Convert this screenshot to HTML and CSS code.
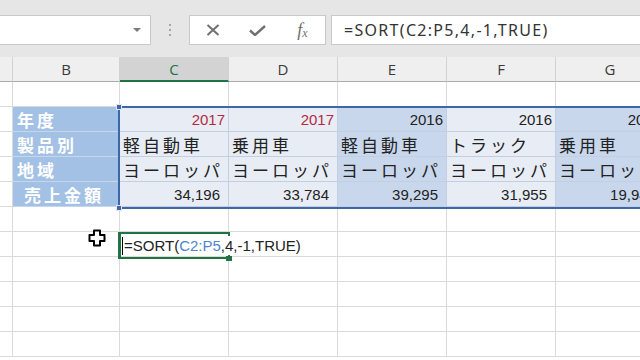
FILE: index.html
```html
<!DOCTYPE html>
<html lang="ja">
<head>
    <meta charset="UTF-8">
    <title>SORT</title>
    <link rel="stylesheet" href="styles.css">
</head>
<body>
    <div class="topbar">
        <div class="namebox"><span class="arrow"></span></div>
        <div class="grip"><i></i><i></i><i></i></div>
        <div class="fxbtns">
            <div class="btn">
                <svg width="14" height="12" viewBox="0 0 14 12"><path d="M1.5 1 L12.5 11 M12.5 1 L1.5 11" stroke="#707070" stroke-width="2" fill="none"/></svg>
            </div>
            <div class="btn">
                <svg width="17" height="11" viewBox="0 0 17 11"><path d="M1 5.5 L6 10 L16 1" stroke="#707070" stroke-width="2.4" fill="none"/></svg>
            </div>
            <div class="btn"><span class="fx">f<sub>x</sub></span></div>
        </div>
        <div class="formula">=SORT(C2:P5,4,-1,TRUE)</div>
    </div>

    <div class="sheet">
        <div class="row head">
            <div class="h"></div>
            <div class="h">B</div>
            <div class="h sel">C</div>
            <div class="h">D</div>
            <div class="h">E</div>
            <div class="h">F</div>
            <div class="h">G</div>
        </div>
        <div class="row"><div></div><div></div><div></div><div></div><div></div><div></div><div></div></div>
        <div class="row">
            <div></div>
            <div class="lbl">年度</div>
            <div class="v lt num red">2017</div>
            <div class="v lt num red">2017</div>
            <div class="v dk num">2016</div>
            <div class="v lt num">2016</div>
            <div class="v dk num">2016</div>
        </div>
        <div class="row">
            <div></div>
            <div class="lbl">製品別</div>
            <div class="v lt">軽自動車</div>
            <div class="v lt">乗用車</div>
            <div class="v dk">軽自動車</div>
            <div class="v lt">トラック</div>
            <div class="v dk">乗用車</div>
        </div>
        <div class="row">
            <div></div>
            <div class="lbl">地域</div>
            <div class="v lt">ヨーロッパ</div>
            <div class="v lt">ヨーロッパ</div>
            <div class="v dk">ヨーロッパ</div>
            <div class="v lt">ヨーロッパ</div>
            <div class="v dk">ヨーロッパ</div>
        </div>
        <div class="row">
            <div></div>
            <div class="lbl indent">売上金額</div>
            <div class="v lt num amt">34,196</div>
            <div class="v lt num amt">33,784</div>
            <div class="v dk num amt">39,295</div>
            <div class="v lt num amt">31,955</div>
            <div class="v dk num amt">19,948</div>
        </div>
        <div class="row"><div></div><div></div><div></div><div></div><div></div><div></div><div></div></div>
        <div class="row"><div></div><div></div><div></div><div></div><div></div><div></div><div></div></div>
        <div class="row"><div></div><div></div><div></div><div></div><div></div><div></div><div></div></div>
        <div class="row"><div></div><div></div><div></div><div></div><div></div><div></div><div></div></div>
        <div class="row"><div></div><div></div><div></div><div></div><div></div><div></div><div></div></div>
        <div class="row"><div></div><div></div><div></div><div></div><div></div><div></div><div></div></div>

        <!-- overlays -->
        <div class="range"></div>
        <div class="knob top"></div>
        <div class="knob bottom"></div>

        <div class="active">
            <span class="edit"><span class="caret"></span>=SORT(<span class="ref">C2:P5</span>,4,-1,TRUE)</span>
        </div>
        <div class="fill"></div>

        <svg class="pointer" width="18" height="18" viewBox="0 0 18 18">
            <path d="M6 1.5 H12 V6 H16.5 V12 H12 V16.5 H6 V12 H1.5 V6 H6 Z" fill="#fff" stroke="#000" stroke-width="2" stroke-linejoin="round"/>
        </svg>
    </div>
</body>
</html>
```

FILE: styles.css
```css
html,body{
    margin:0;
    padding:0;
    width:640px;
    height:360px;
    overflow:hidden;
    background:#fff;
    font-family:"Liberation Sans", Arial, sans-serif;
}

/* formula bar */
.topbar{
    height:57px;
    box-sizing:border-box;
    padding-top:15px;
    background:#e6e6e6;
    display:flex;
    align-items:flex-start;
}
.namebox{
    width:152px;
    height:30px;
    box-sizing:border-box;
    margin-left:-1px;
    background:#fff;
    border:1px solid #c9c9c9;
    display:flex;
    align-items:center;
    justify-content:flex-end;
    padding-right:9px;
}
.arrow{
    width:0;
    height:0;
    border-left:4px solid transparent;
    border-right:4px solid transparent;
    border-top:4px solid #7b7b7b;
}
.grip{
    width:38px;
    height:30px;
    display:flex;
    flex-direction:column;
    align-items:center;
    justify-content:center;
    gap:3px;
}
.grip i{
    width:2px;
    height:2px;
    background:#a6a6a6;
}
.fxbtns{
    width:137px;
    height:30px;
    box-sizing:border-box;
    background:#fff;
    border:1px solid #c9c9c9;
    display:flex;
    align-items:center;
}
.btn{
    width:45px;
    height:28px;
    display:flex;
    align-items:center;
    justify-content:center;
}
.fx{
    font-family:"Liberation Serif", serif;
    font-style:italic;
    font-size:18px;
    color:#707070;
    line-height:1;
}
.fx sub{
    font-size:12px;
    vertical-align:-1px;
}
.formula{
    flex:1;
    height:30px;
    box-sizing:border-box;
    margin-left:5px;
    margin-right:-2px;
    background:#fff;
    border:1px solid #c9c9c9;
    padding-left:12px;
    font-family:"Noto Sans", sans-serif;
    font-size:16px;
    letter-spacing:1.3px;
    line-height:28px;
    color:#333;
    white-space:nowrap;
}

/* grid */
.sheet{
    position:relative;
}
.row{
    display:grid;
    grid-template-columns:13px 107px 109px 109px 109px 109px 109px;
    height:25px;
}
.row > div{
    box-sizing:border-box;
    border-right:1px solid #dadada;
    border-bottom:1px solid #dadada;
    display:flex;
    align-items:center;
    white-space:nowrap;
    overflow:hidden;
}
.head{
    background:#efefef;
}
.head .h{
    justify-content:center;
    border-bottom-color:#ababab;
    border-right-color:#d2d2d2;
    font-family:"Open Sans", sans-serif;
    font-size:15px;
    color:#3a3a3a;
}
.head .sel{
    background:#d3d3d3;
    color:#217346;
    border-bottom:2px solid #217346;
}

.row .lbl{
    background:#a3c1e4;
    border-bottom-color:#c6d6eb;
    color:#fff;
    font-weight:bold;
    font-family:"Noto Sans CJK JP", sans-serif;
    font-size:17px;
    letter-spacing:3px;
    padding-left:4px;
}
.row .indent{
    padding-left:11px;
}
.row .v{
    font-family:"Noto Sans CJK JP", sans-serif;
    font-size:17px;
    letter-spacing:3px;
    color:#222;
    padding-left:3px;
    border-color:#c3cfe0;
}
.row .lt{
    background:#e8edf5;
}
.row .dk{
    background:#c9d7ec;
}
.row .num{
    justify-content:flex-end;
    font-family:"Liberation Sans", Arial, sans-serif;
    font-size:15px;
    letter-spacing:0;
    padding-right:3px;
}
.row .amt{
    padding-right:8px;
}
.row .red{
    color:#b52a3f;
}

/* selection range */
.range{
    position:absolute;
    left:118px;
    top:49px;
    width:540px;
    height:103px;
    box-sizing:border-box;
    border:2px solid #3e67aa;
}
.knob{
    position:absolute;
    left:116px;
    width:6px;
    height:6px;
    background:#3e67aa;
    border:1px solid #dfe7f3;
    box-sizing:border-box;
}
.knob.top{
    top:47px;
}
.knob.bottom{
    top:148px;
}

/* cell being edited */
.active{
    position:absolute;
    left:118px;
    top:175px;
    width:112px;
    height:27px;
    box-sizing:border-box;
    border:2px solid #217346;
    border-left-width:3px;
}
.edit{
    position:absolute;
    left:1px;
    top:2px;
    height:19px;
    line-height:19px;
    padding-right:2px;
    background:#fff;
    white-space:nowrap;
    font-size:15px;
    color:#222;
}
.caret{
    display:inline-block;
    width:1px;
    height:18px;
    background:#000;
    vertical-align:-4px;
    margin-right:1px;
}
.ref{
    color:#4d86d0;
}
.fill{
    position:absolute;
    left:226px;
    top:199px;
    width:6px;
    height:5px;
    background:#217346;
}
.pointer{
    position:absolute;
    left:88px;
    top:172px;
}
```
